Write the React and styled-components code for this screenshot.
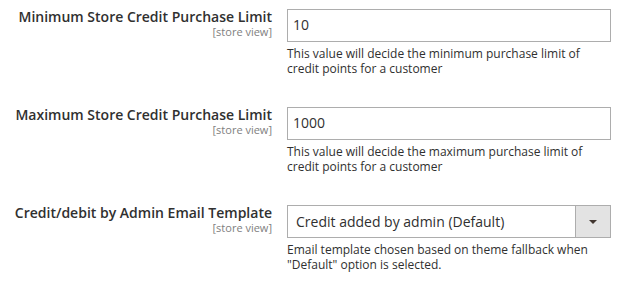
import styled, { createGlobalStyle } from 'styled-components'

const GlobalStyle = createGlobalStyle`
  body {
    margin: 0;
    background: #fff;
    font-family: 'Open Sans', 'Liberation Sans', sans-serif;
    color: #303030;
  }
`

const Form = styled.div`
  padding-top: 9px;
  display: flex;
  flex-direction: column;
  gap: 31px;
`
const Field = styled.div`
  display: grid;
  grid-template-columns: 272px 324px;
  column-gap: 15px;
`
const LabelCell = styled.div`
  display: flex;
  flex-direction: column;
  align-items: flex-end;
  text-align: right;
`
const Label = styled.label`
  font-size: 14px;
  font-weight: 600;
  line-height: 16px;
  color: #303030;
`
const Scope = styled.span`
  font-size: 11px;
  line-height: 13px;
  color: #808080;
`
const Control = styled.div`
  display: flex;
  flex-direction: column;
`
const Input = styled.input`
  box-sizing: border-box;
  width: 100%;
  height: 33px;
  margin: 0;
  padding: 0 5px 2px;
  border: 1px solid #adadad;
  border-radius: 0;
  font-family: inherit;
  font-size: 14px;
  color: #303030;
  outline: none;
`
const Select = styled.div`
  box-sizing: border-box;
  height: 33px;
  display: flex;
  border: 1px solid #adadad;
  font-size: 14px;
  color: #303030;
`
const SelectValue = styled.span`
  flex: 1;
  display: flex;
  align-items: center;
  padding-left: 8px;
  padding-bottom: 1px;
`
const ArrowBox = styled.span`
  width: 34px;
  display: flex;
  align-items: center;
  justify-content: center;
  background: #e3e3e3;
  border-left: 1px solid #adadad;
  &::after {
    content: '';
    border-left: 4px solid transparent;
    border-right: 4px solid transparent;
    border-top: 4px solid #41362f;
    margin-top: 1px;
  }
`
const Note = styled.div`
  margin-top: 4px;
  font-size: 12px;
  line-height: 15px;
  color: #303030;
`

const fields = [
  {
    label: 'Minimum Store Credit Purchase Limit',
    value: '10',
    note: 'This value will decide the minimum purchase limit of credit points for a customer'
  },
  {
    label: 'Maximum Store Credit Purchase Limit',
    value: '1000',
    note: 'This value will decide the maximum purchase limit of credit points for a customer'
  },
  {
    label: 'Credit/debit by Admin Email Template',
    select: 'Credit added by admin (Default)',
    note: 'Email template chosen based on theme fallback when "Default" option is selected.'
  }
]

const App = () => {
  return (
    <>
      <GlobalStyle />
      <Form>
        {fields.map(f => (
          <Field key={f.label}>
            <LabelCell>
              <Label>{f.label}</Label>
              <Scope>[store view]</Scope>
            </LabelCell>
            <Control>
              {f.select ? (
                <Select>
                  <SelectValue>{f.select}</SelectValue>
                  <ArrowBox />
                </Select>
              ) : (
                <Input type='text' defaultValue={f.value} />
              )}
              <Note>{f.note}</Note>
            </Control>
          </Field>
        ))}
      </Form>
    </>
  )
}

export default App
